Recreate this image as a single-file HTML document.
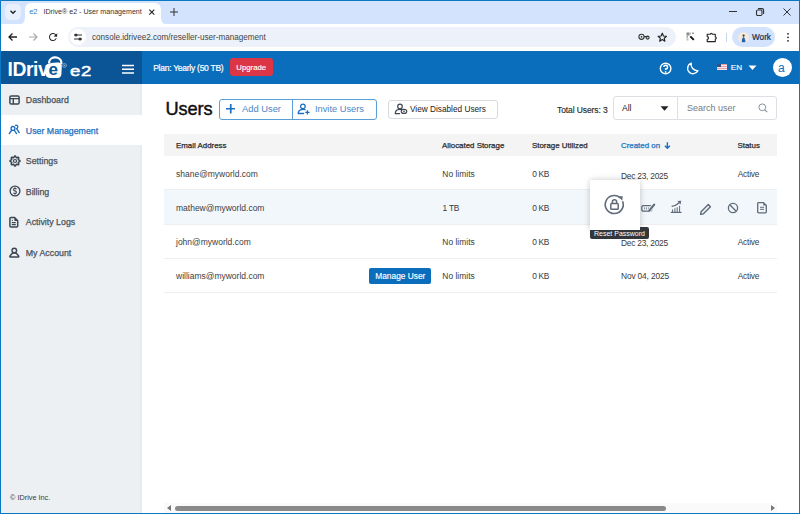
<!DOCTYPE html>
<html><head><meta charset="utf-8">
<style>
*{box-sizing:border-box;margin:0;padding:0}
html,body{width:800px;height:514px;overflow:hidden;background:#fff;font-family:"Liberation Sans",sans-serif}
.a{position:absolute}
.t{position:absolute;white-space:nowrap;line-height:1}
</style></head><body>
<!-- browser tab strip -->
<div class="a" style="left:0;top:0;width:800px;height:24px;background:#d3e3fd"></div>
<!-- active tab -->
<svg class="a" style="left:0;top:0" width="200" height="26" viewBox="0 0 200 26"><path d="M18 24.5 C23 24.5 25 22 25 17 V11 C25 5 27 3 33 3 H153 C159 3 161 5 161 11 V17 C161 22 163 24.5 168 24.5 Z" fill="#fff"/></svg>
<div class="a" style="left:5px;top:4px;width:16px;height:16px;background:#e8f0fd;border-radius:5px"></div>
<svg class="a" style="left:9px;top:8px" width="8" height="8" viewBox="0 0 8 8"><path d="M1.5 2.8 L4 5.2 L6.5 2.8" fill="none" stroke="#222" stroke-width="1.4"/></svg>
<div class="t" style="left:29.3px;top:8px;font-size:7.6px;color:#2a7fd0;letter-spacing:-0.2px">e2</div>
<div class="t" style="left:43.5px;top:8.5px;font-size:7.1px;color:#333">IDrive® e2 - User management</div>
<svg class="a" style="left:148px;top:8px" width="8" height="8" viewBox="0 0 8 8"><path d="M1.3 1.6 L6.3 6.6 M6.3 1.6 L1.3 6.6" stroke="#222" stroke-width="1.1"/></svg>
<svg class="a" style="left:168.5px;top:7px" width="10" height="10" viewBox="0 0 10 10"><path d="M5 1 V9 M1 5 H9" stroke="#333" stroke-width="1"/></svg>
<!-- window controls -->
<div class="a" style="left:729px;top:11px;width:8px;height:1px;background:#333"></div>
<svg class="a" style="left:755px;top:7px" width="10" height="10" viewBox="0 0 10 10"><rect x="1.5" y="3" width="5.5" height="5.5" rx="1.2" fill="none" stroke="#333" stroke-width="1.1"/><path d="M3 1.6 H7 Q8.6 1.6 8.6 3.2 V7" fill="none" stroke="#333" stroke-width="1.1"/></svg>
<svg class="a" style="left:782px;top:7px" width="10" height="10" viewBox="0 0 10 10"><path d="M1.5 1.5 L8.5 8.5 M8.5 1.5 L1.5 8.5" stroke="#333" stroke-width="1"/></svg>
<!-- toolbar -->
<div class="a" style="left:0;top:24px;width:800px;height:27px;background:#fff"></div>
<svg class="a" style="left:6px;top:31px" width="14" height="12" viewBox="0 0 14 12"><path d="M3 6 H11 M6.5 2.5 L3 6 L6.5 9.5" fill="none" stroke="#222" stroke-width="1.3"/></svg>
<svg class="a" style="left:26px;top:31px" width="14" height="12" viewBox="0 0 14 12"><path d="M3 6 H11 M7.5 2.5 L11 6 L7.5 9.5" fill="none" stroke="#aaa" stroke-width="1.2"/></svg>
<svg class="a" style="left:47.4px;top:31.2px" width="12" height="12" viewBox="0 0 24 24"><path transform="rotate(5 12 12)" d="M17.65 6.35C16.2 4.9 14.21 4 12 4c-4.42 0-7.99 3.58-7.99 8s3.57 8 7.99 8c3.73 0 6.84-2.55 7.73-6h-2.08c-.82 2.33-3.04 4-5.65 4-3.31 0-6-2.69-6-6s2.69-6 6-6c1.66 0 3.140.69 4.22 1.78L13 11h7V4l-2.35 2.35z" fill="#222"/></svg>
<div class="a" style="left:68px;top:27px;width:608px;height:20px;background:#edf2fa;border-radius:10px"></div>
<div class="a" style="left:70px;top:29px;width:16px;height:16px;background:#fff;border-radius:8px"></div>
<svg class="a" style="left:73px;top:32px" width="10" height="10" viewBox="0 0 10 10"><path d="M1 3 H9 M1 7 H9" stroke="#333" stroke-width="1.1"/><circle cx="3" cy="3" r="1.5" fill="#333"/><circle cx="7" cy="7" r="1.5" fill="#333"/></svg>
<div class="t" style="left:92px;top:34px;font-size:8.13px;color:#444">console.idrivee2.com/reseller-user-management</div>
<svg class="a" style="left:637px;top:32px" width="14" height="10" viewBox="0 0 14 10"><circle cx="4.5" cy="4.8" r="2.6" fill="none" stroke="#333" stroke-width="1.1"/><circle cx="4.5" cy="4.8" r="0.9" fill="#333"/><path d="M7.1 4.6 H11" stroke="#333" stroke-width="1.2"/><circle cx="10.6" cy="5.6" r="1.5" fill="none" stroke="#333" stroke-width="1.1"/></svg><svg class="a" style="left:657px;top:32px" width="11" height="11" viewBox="0 0 11 11"><path d="M5.3 1.2 L6.5 4 L9.5 4.3 L7.2 6.2 L7.9 9.2 L5.3 7.6 L2.7 9.2 L3.4 6.2 L1.1 4.3 L4.1 4 Z" fill="none" stroke="#222" stroke-width="1.15" stroke-linejoin="round"/></svg>
<svg class="a" style="left:686px;top:32px" width="9" height="9" viewBox="0 0 9 9"><rect x="0.5" y="0.5" width="3" height="3" fill="#888"/><rect x="3.5" y="0.5" width="1.5" height="2" fill="#bbb"/><rect x="0.5" y="3.5" width="1.5" height="2.5" fill="#aaa"/><rect x="6" y="0.5" width="2" height="1.5" fill="#999"/><rect x="0.5" y="6.5" width="2" height="2" fill="#bbb"/><path d="M4.3 4.3 L7.8 7.8" stroke="#111" stroke-width="1.9"/></svg><svg class="a" style="left:706px;top:31.5px" width="12" height="11" viewBox="0 0 12 11"><path d="M1.2 2.3 H4.3 A1 1 0 0 1 6.3 2.3 H9.3 V5 A1 1 0 0 1 9.3 7 V9.6 H1.2 V7.2 A1.3 1.3 0 0 0 1.2 4.6 Z" fill="none" stroke="#222" stroke-width="1.1" stroke-linejoin="round"/></svg>
<div class="a" style="left:726px;top:33px;width:1px;height:9px;background:#c5d5ec"></div>
<div class="a" style="left:732px;top:27px;width:43px;height:20px;background:#d3e3fd;border-radius:10px"></div>
<div class="a" style="left:737.5px;top:31.5px;width:11px;height:11px;background:#f1eadf;border-radius:50%"></div>
<svg class="a" style="left:737.5px;top:31.5px" width="11" height="11" viewBox="0 0 11 11"><circle cx="5.6" cy="3.6" r="1.1" fill="#3a3020"/><path d="M3.9 10.3 Q3.6 6 5.6 5 Q7.4 6 7.2 10.3 Z" fill="#1d5fb0"/><path d="M6.8 7.5 L8 9.5" stroke="#d9a060" stroke-width="0.8"/></svg>
<div class="t" style="left:752px;top:33.8px;font-size:8.2px;color:#1b2a48;-webkit-text-stroke:0.2px #1b2a48">Work</div>
<svg class="a" style="left:785.5px;top:32px" width="4" height="11" viewBox="0 0 4 11"><circle cx="2" cy="1.8" r="0.9" fill="#222"/><circle cx="2" cy="5.3" r="0.9" fill="#222"/><circle cx="2" cy="8.8" r="0.9" fill="#222"/></svg>

<!-- app header -->
<div class="a" style="left:0;top:51px;width:800px;height:33px;background:#0a6ebd"></div>
<div class="a" style="left:0;top:51px;width:142px;height:33px;background:#0b5596"></div>
<div class="t" style="left:7.6px;top:59.9px;font-size:19.3px;color:#fff;font-weight:bold;letter-spacing:-0.45px">IDriv</div>
<svg class="a" style="left:44px;top:54px" width="24" height="26" viewBox="0 0 24 26"><path d="M5.2 9.5 V7.6 A6.1 4.9 0 0 1 17.3 7.9 V10" fill="none" stroke="#fff" stroke-width="2.2"/><path d="M3 10.3 Q8 8.2 14.8 8.6 Q18 9 17.8 12.5 L17.4 20.2 Q17 23.8 13.5 23.9 L5.8 23.9 Q1.6 23.6 1.6 19.5 L1.6 13.5 Q1.6 11.2 3 10.3 Z" fill="#fff"/><text x="9.3" y="20.8" font-size="17" font-weight="bold" font-family="Liberation Sans" fill="#0b5596" text-anchor="middle">e</text></svg>
<div class="t" style="left:69.8px;top:62.7px;font-size:15px;color:#fff;letter-spacing:0.5px;transform:scaleX(1.24);transform-origin:0 0;-webkit-text-stroke:0.5px #fff">e2</div>
<svg class="a" style="left:62px;top:63px" width="5" height="5" viewBox="0 0 5 5"><circle cx="2.5" cy="2.5" r="1.9" fill="none" stroke="#9fb4cf" stroke-width="0.8"/><circle cx="2.5" cy="2.5" r="0.7" fill="#9fb4cf"/></svg>
<svg class="a" style="left:122.2px;top:64px" width="12" height="11" viewBox="0 0 12 11"><path d="M0 1.5 H12 M0 5.25 H12 M0 9 H12" stroke="#fff" stroke-width="1.7"/></svg>
<div class="t" style="left:153.2px;top:64px;font-size:8.5px;letter-spacing:-0.26px;color:#fff;-webkit-text-stroke:0.2px #fff">Plan: Yearly (50 TB)</div>
<div class="a" style="left:230px;top:58px;width:43px;height:18px;background:#dc3545;border-radius:3px"></div>
<div class="t" style="left:236.3px;top:63.5px;font-size:7.8px;color:#fff;-webkit-text-stroke:0.15px #fff">Upgrade</div>
<svg class="a" style="left:659px;top:61.5px" width="13" height="13" viewBox="0 0 13 13"><circle cx="6.6" cy="6.5" r="5.3" fill="none" stroke="#fff" stroke-width="1.4"/><path d="M4.8 5.1 A1.85 1.85 0 1 1 6.6 7 V8.1" fill="none" stroke="#fff" stroke-width="1.5"/><circle cx="6.6" cy="9.9" r="0.85" fill="#fff"/></svg>
<svg class="a" style="left:686px;top:62px" width="13" height="13" viewBox="0 0 13 13"><path d="M5.2 1.2 A5.4 5.4 0 1 0 11.9 8.6 A6.2 6.2 0 0 1 5.2 1.2 Z" fill="none" stroke="#fff" stroke-width="1.4" stroke-linejoin="round"/></svg>
<div class="a" style="left:717px;top:64px;width:10px;height:6px;background:repeating-linear-gradient(#e8a0a8 0 1px,#f0e8ee 1px 2px)"></div>
<div class="a" style="left:717px;top:64px;width:4px;height:3px;background:#3a4f7a"></div>
<div class="t" style="left:730.8px;top:63.6px;font-size:8.1px;color:#fff;-webkit-text-stroke:0.15px #fff">EN</div>
<svg class="a" style="left:748px;top:65px" width="9" height="6" viewBox="0 0 9 6"><path d="M0.5 0.5 H8.5 L4.5 5 Z" fill="#fff"/></svg>
<div class="a" style="left:773px;top:58px;width:19px;height:19px;background:#fff;border-radius:50%"></div>
<div class="t" style="left:778px;top:62px;font-size:12px;color:#0a6ebd">a</div>

<!-- sidebar -->
<div class="a" style="left:0;top:84px;width:142px;height:430px;background:#edf0f3"></div>
<div class="a" style="left:140px;top:84px;width:2px;height:430px;background:#e6ebf0"></div>
<div class="a" style="left:0;top:115px;width:142px;height:30px;background:#fff"></div>

<!-- sidebar items -->
<svg class="a" style="left:9px;top:95px" width="11" height="10" viewBox="0 0 11 10"><rect x="0.9" y="0.9" width="9.2" height="8.2" rx="1.3" fill="none" stroke="#3b4652" stroke-width="1.5"/><path d="M1 3.6 H10 M4.3 3.6 V9" stroke="#3b4652" stroke-width="1.4"/></svg>
<div class="t" style="left:25.8px;top:96.0px;font-size:8.8px;-webkit-text-stroke:0.25px #48515b;color:#48515b">Dashboard</div>
<svg class="a" style="left:8px;top:123px" width="13" height="12" viewBox="0 0 13 12"><circle cx="5" cy="5.4" r="1.9" fill="none" stroke="#1a6fc0" stroke-width="1.35"/><path d="M1.3 10.6 L3.5 7.5 M6.5 7.5 L8.5 10.6" fill="none" stroke="#1a6fc0" stroke-width="1.35" stroke-linecap="round"/><path d="M7.6 2.3 Q9.6 2 9.8 3.6 Q9.9 5 8.7 5.7 L11.2 9.6" fill="none" stroke="#1a6fc0" stroke-width="1.35" stroke-linecap="round"/></svg>
<div class="t" style="left:25.8px;top:126.5px;font-size:8.8px;-webkit-text-stroke:0.25px #1a6fc0;color:#1a6fc0">User Management</div>
<svg class="a" style="left:8.7px;top:154.9px" width="12" height="12" viewBox="0 0 12 12"><path d="M11.05 6.00 L10.94 6.32 L10.64 6.61 L10.22 6.84 L9.79 7.02 L9.46 7.17 L9.28 7.36 L9.27 7.61 L9.40 7.96 L9.58 8.39 L9.71 8.85 L9.72 9.26 L9.57 9.57 L9.26 9.72 L8.85 9.71 L8.39 9.58 L7.96 9.40 L7.61 9.27 L7.36 9.28 L7.17 9.46 L7.02 9.79 L6.84 10.22 L6.61 10.64 L6.32 10.94 L6.00 11.05 L5.68 10.94 L5.39 10.64 L5.16 10.22 L4.98 9.79 L4.83 9.46 L4.64 9.28 L4.39 9.27 L4.04 9.40 L3.61 9.58 L3.15 9.71 L2.74 9.72 L2.43 9.57 L2.28 9.26 L2.29 8.85 L2.42 8.39 L2.60 7.96 L2.73 7.61 L2.72 7.36 L2.54 7.17 L2.21 7.02 L1.78 6.84 L1.36 6.61 L1.06 6.32 L0.95 6.00 L1.06 5.68 L1.36 5.39 L1.78 5.16 L2.21 4.98 L2.54 4.83 L2.72 4.64 L2.73 4.39 L2.60 4.04 L2.42 3.61 L2.29 3.15 L2.28 2.74 L2.43 2.43 L2.74 2.28 L3.15 2.29 L3.61 2.42 L4.04 2.60 L4.39 2.73 L4.64 2.72 L4.83 2.54 L4.98 2.21 L5.16 1.78 L5.39 1.36 L5.68 1.06 L6.00 0.95 L6.32 1.06 L6.61 1.36 L6.84 1.78 L7.02 2.21 L7.17 2.54 L7.36 2.72 L7.61 2.73 L7.96 2.60 L8.39 2.42 L8.85 2.29 L9.26 2.28 L9.57 2.43 L9.72 2.74 L9.71 3.15 L9.58 3.61 L9.40 4.04 L9.27 4.39 L9.28 4.64 L9.46 4.83 L9.79 4.98 L10.22 5.16 L10.64 5.39 L10.94 5.68 Z" fill="none" stroke="#3b4652" stroke-width="1.5" stroke-linejoin="round"/><circle cx="6" cy="6" r="1.5" fill="none" stroke="#3b4652" stroke-width="1.2"/></svg>
<div class="t" style="left:25.8px;top:157.0px;font-size:8.8px;-webkit-text-stroke:0.25px #48515b;color:#48515b">Settings</div>
<svg class="a" style="left:8.5px;top:185.1px" width="12" height="12" viewBox="0 0 12 12"><circle cx="6" cy="6" r="4.9" fill="none" stroke="#3b4652" stroke-width="1.3"/><path d="M7.4 4.2 Q7 3.4 6 3.4 Q4.5 3.4 4.6 4.6 Q4.7 5.6 6 5.9 Q7.5 6.3 7.4 7.4 Q7.3 8.6 6 8.6 Q4.9 8.6 4.5 7.8" fill="none" stroke="#3b4652" stroke-width="1.1"/><path d="M6 2.5 V3.5 M6 8.5 V9.5" stroke="#3b4652" stroke-width="1"/></svg>
<div class="t" style="left:25.8px;top:187.5px;font-size:8.8px;-webkit-text-stroke:0.25px #48515b;color:#48515b">Billing</div>
<svg class="a" style="left:8px;top:216px" width="12" height="12" viewBox="0 0 12 12"><path d="M1.9 2.6 Q1.9 1.6 2.9 1.6 H6.6 L9.7 4.7 V10.1 Q9.7 11.1 8.7 11.1 H2.9 Q1.9 11.1 1.9 10.1 Z" fill="none" stroke="#3b4652" stroke-width="1.5" stroke-linejoin="round"/><path d="M6.4 1.6 L9.7 4.9 L6.4 4.9 Z" fill="#3b4652"/><path d="M3.8 6.6 H7.8 M3.8 8.6 H7.8" stroke="#3b4652" stroke-width="1.1"/><path d="M3.8 4.3 H5" stroke="#3b4652" stroke-width="1"/></svg>
<div class="t" style="left:25.8px;top:218.0px;font-size:8.8px;-webkit-text-stroke:0.25px #48515b;color:#48515b">Activity Logs</div>
<svg class="a" style="left:8px;top:245.5px" width="13" height="13" viewBox="0 0 13 13"><circle cx="6.3" cy="4.5" r="2.3" fill="none" stroke="#3b4652" stroke-width="1.4"/><path d="M2 11 Q1.6 10.6 2 10 L3.8 7.7 Q4.4 7 5.3 7 H7.3 Q8.2 7 8.8 7.7 L10.6 10 Q11 10.6 10.6 11 Z" fill="none" stroke="#3b4652" stroke-width="1.4" stroke-linejoin="round"/></svg>
<div class="t" style="left:25.8px;top:248.5px;font-size:8.8px;-webkit-text-stroke:0.25px #48515b;color:#48515b">My Account</div>
<div class="t" style="left:10px;top:494px;font-size:7.3px;color:#3a3a3a">© IDrive Inc.</div>

<!-- content header -->
<div class="t" style="left:165.5px;top:100px;font-size:18.2px;-webkit-text-stroke:0.45px #111;letter-spacing:-0.1px;color:#111">Users</div>
<div class="a" style="left:219px;top:99px;width:158px;height:21px;border:1px solid #5b9fd8;border-radius:3px"></div>
<div class="a" style="left:292px;top:100px;width:1px;height:19px;background:#5b9fd8"></div>
<svg class="a" style="left:225.5px;top:104.3px" width="9.5" height="9.5" viewBox="0 0 9.5 9.5"><path d="M4.75 0 V9.5 M0 4.75 H9.5" stroke="#1a6fc0" stroke-width="1.7"/></svg>
<div class="t" style="left:242px;top:104.8px;font-size:9.36px;color:#4a86c6">Add User</div>
<svg class="a" style="left:297px;top:103px" width="14" height="13" viewBox="0 0 14 13"><circle cx="5.9" cy="3.4" r="2.3" fill="none" stroke="#1a6fc0" stroke-width="1.3"/><path d="M8 6.6 Q5.5 6.2 3.5 6.8 Q1.3 7.6 1.3 10.5 H6.6" fill="none" stroke="#1a6fc0" stroke-width="1.3" stroke-linecap="round"/><path d="M10.4 7.2 V11.6 M8.2 9.4 H12.6" stroke="#1a6fc0" stroke-width="1.3"/></svg>
<div class="t" style="left:315px;top:104.8px;font-size:9.28px;color:#4a86c6">Invite Users</div>
<div class="a" style="left:388px;top:100px;width:110px;height:19px;border:1px solid #d6dadf;border-radius:3px"></div>
<svg class="a" style="left:394px;top:103px" width="14" height="13" viewBox="0 0 14 13"><circle cx="6" cy="3.4" r="2.3" fill="none" stroke="#3b4652" stroke-width="1.15"/><path d="M7.8 6.6 Q5.5 6.2 3.6 6.8 Q1.3 7.6 1.3 10.6 H5.6" fill="none" stroke="#3b4652" stroke-width="1.15" stroke-linecap="round"/><ellipse cx="10" cy="8.4" rx="2.8" ry="2" fill="none" stroke="#3b4652" stroke-width="1.1"/><circle cx="10" cy="8.4" r="0.8" fill="#3b4652"/></svg>
<div class="t" style="left:410px;top:105.5px;font-size:8.25px;color:#222">View Disabled Users</div>
<div class="t" style="left:557px;top:106px;font-size:8.5px;letter-spacing:-0.1px;-webkit-text-stroke:0.15px #2a2a2a;color:#2a2a2a">Total Users: 3</div>
<div class="a" style="left:613px;top:96px;width:164px;height:24px;border:1px solid #dcdfe3;border-radius:3px"></div>
<div class="a" style="left:677px;top:97px;width:1px;height:22px;background:#dcdfe3"></div>
<div class="t" style="left:622px;top:104px;font-size:8.5px;color:#222">All</div>
<svg class="a" style="left:660px;top:106px" width="9" height="5" viewBox="0 0 9 5"><path d="M0.5 0.3 H8.5 L4.5 4.8 Z" fill="#222"/></svg>
<div class="t" style="left:687px;top:104px;font-size:9px;color:#757b82">Search user</div>
<svg class="a" style="left:757px;top:102px" width="12" height="12" viewBox="0 0 12 12"><circle cx="5.3" cy="5.3" r="3.4" fill="none" stroke="#86929e" stroke-width="1"/><path d="M7.8 7.8 L10.2 10.2" stroke="#86929e" stroke-width="1.2"/></svg>

<!-- table -->
<div class="a" style="left:164px;top:134px;width:613px;height:22px;background:#f4f4f4"></div>
<div class="t" style="left:176px;top:141.5px;font-size:7.9px;-webkit-text-stroke:0.25px #2b2b2b;color:#2b2b2b">Email Address</div>
<div class="t" style="left:442px;top:141.5px;font-size:7.9px;-webkit-text-stroke:0.25px #2b2b2b;color:#2b2b2b">Allocated Storage</div>
<div class="t" style="left:532px;top:141.5px;font-size:7.9px;-webkit-text-stroke:0.25px #2b2b2b;color:#2b2b2b">Storage Utilized</div>
<div class="t" style="left:621px;top:141.5px;font-size:7.9px;-webkit-text-stroke:0.25px #1a73c0;color:#1a73c0">Created on</div>
<svg class="a" style="left:664px;top:142.3px" width="7" height="7" viewBox="0 0 7 7"><path d="M3.4 0.3 V6.3 M0.9 3.8 L3.4 6.3 L5.9 3.8" fill="none" stroke="#1a6fc0" stroke-width="1.4"/></svg>
<div class="t" style="left:737.5px;top:141.5px;font-size:7.9px;-webkit-text-stroke:0.25px #2b2b2b;color:#2b2b2b">Status</div>

<div class="a" style="left:164px;top:189px;width:613px;height:1px;background:#eeeeee"></div>
<div class="a" style="left:164px;top:190px;width:613px;height:34px;background:#f2f7fc"></div>
<div class="a" style="left:164px;top:224px;width:613px;height:1px;background:#eeeeee"></div>
<div class="a" style="left:164px;top:258px;width:613px;height:1px;background:#eeeeee"></div>
<div class="a" style="left:164px;top:292px;width:613px;height:1px;background:#eeeeee"></div>

<div class="t" style="left:176px;top:170px;font-size:8.5px;color:#3d3d3d">shane@myworld.com</div>

<div class="t" style="left:176px;top:204px;font-size:8.5px;color:#3d3d3d">mathew@myworld.com</div>

<div class="t" style="left:176px;top:238px;font-size:8.5px;color:#3d3d3d">john@myworld.com</div>

<div class="t" style="left:176px;top:272px;font-size:8.5px;color:#3d3d3d">williams@myworld.com</div>
<div class="a" style="left:369px;top:268px;width:62px;height:16px;background:#0a6ebd;border-radius:2px"></div>
<div class="t" style="left:375.3px;top:271.7px;font-size:8.33px;color:#fff;-webkit-text-stroke:0.15px #fff">Manage User</div>

<div class="t" style="left:442.3px;top:170.39px;font-size:8.4px;letter-spacing:0.037px;color:#3a3a3a">No limits</div>
<div class="t" style="left:532.2px;top:170.39px;font-size:8.4px;letter-spacing:-0.37px;color:#3a3a3a">0 KB</div>
<div class="t" style="left:621px;top:171.89px;font-size:8.4px;letter-spacing:-0.243px;color:#3a3a3a">Dec 23, 2025</div>
<div class="t" style="left:737.7px;top:170.39px;font-size:8.4px;letter-spacing:-0.215px;color:#3a3a3a">Active</div>
<div class="t" style="left:442.5px;top:204.19px;font-size:8.4px;letter-spacing:-0.2px;color:#3a3a3a">1 TB</div>
<div class="t" style="left:532.2px;top:204.19px;font-size:8.4px;letter-spacing:-0.37px;color:#3a3a3a">0 KB</div>
<div class="t" style="left:442.3px;top:238.19px;font-size:8.4px;letter-spacing:0.037px;color:#3a3a3a">No limits</div>
<div class="t" style="left:532.2px;top:238.19px;font-size:8.4px;letter-spacing:-0.37px;color:#3a3a3a">0 KB</div>
<div class="t" style="left:621px;top:239.19px;font-size:8.4px;letter-spacing:-0.243px;color:#3a3a3a">Dec 23, 2025</div>
<div class="t" style="left:737.7px;top:238.19px;font-size:8.4px;letter-spacing:-0.215px;color:#3a3a3a">Active</div>
<div class="t" style="left:442.3px;top:272.09px;font-size:8.4px;letter-spacing:0.037px;color:#3a3a3a">No limits</div>
<div class="t" style="left:532.2px;top:272.09px;font-size:8.4px;letter-spacing:-0.37px;color:#3a3a3a">0 KB</div>
<div class="t" style="left:621px;top:272.09px;font-size:8.4px;letter-spacing:-0.161px;color:#3a3a3a">Nov 04, 2025</div>
<div class="t" style="left:737.7px;top:272.09px;font-size:8.4px;letter-spacing:-0.215px;color:#3a3a3a">Active</div>
<!-- action icons row 2 -->
<svg class="a" style="left:640px;top:201px" width="16" height="12" viewBox="0 0 16 12"><rect x="1.8" y="4.6" width="10" height="5.6" rx="1.6" fill="none" stroke="#5f6b78" stroke-width="1.3"/><path d="M4.6 6.4 V8.4 M6.6 6.4 V8.4 M8.6 6.4 V8.4" stroke="#5f6b78" stroke-width="0.8"/><path d="M8.8 10.2 L14.6 3.2" stroke="#f2f7fc" stroke-width="3.6"/><path d="M9.2 9.6 L14.2 3.6" stroke="#5f6b78" stroke-width="2.2" stroke-linecap="round"/></svg>
<svg class="a" style="left:670px;top:200px" width="13" height="14" viewBox="0 0 13 14"><path d="M0.8 12.4 H11.6" stroke="#5f6b78" stroke-width="1.2"/><path d="M2.6 12 V9.4 M4.9 12 V8.2 M7.2 12 V7.2 M9.6 12 V5.8" stroke="#5f6b78" stroke-width="1"/><path d="M1.6 6.4 Q6 5.6 9.6 2.4" fill="none" stroke="#5f6b78" stroke-width="1.3"/><path d="M7.4 1 L11.2 0.8 L10.6 4.4 Z" fill="#5f6b78"/></svg>
<svg class="a" style="left:699px;top:203px" width="13" height="12" viewBox="0 0 13 12"><path d="M9.3 1.6 L11.4 3.7 L4.2 10.9 L1.6 11.4 L2.1 8.8 Z" fill="none" stroke="#5f6b78" stroke-width="1.4" stroke-linejoin="round"/></svg>
<svg class="a" style="left:727px;top:202px" width="12" height="12" viewBox="0 0 12 12"><circle cx="6" cy="6" r="4.6" fill="none" stroke="#5f6b78" stroke-width="1.3"/><path d="M2.8 2.8 L9.2 9.2" stroke="#5f6b78" stroke-width="1.3"/></svg>
<svg class="a" style="left:756px;top:201px" width="12" height="13" viewBox="0 0 12 13"><path d="M1.7 2.4 Q1.7 1.6 2.5 1.6 H7.5 L10.3 4.4 V11 Q10.3 11.8 9.5 11.8 H2.5 Q1.7 11.8 1.7 11 Z" fill="none" stroke="#5f6b78" stroke-width="1.3" stroke-linejoin="round"/><path d="M7.3 1.6 L10.3 4.6 L7.3 4.6 Z" fill="#5f6b78"/><path d="M4 6.3 H8 M4 8.3 H8" stroke="#5f6b78" stroke-width="1"/></svg>

<!-- popup -->
<div class="a" style="left:590px;top:180px;width:50px;height:50px;background:#fff;box-shadow:0 0 6px rgba(0,0,0,0.22)"></div>
<div class="a" style="left:590px;top:227px;width:59px;height:12px;background:#33373b;border-radius:2px"></div>
<div class="a" style="left:590px;top:180px;width:50px;height:50px;background:#fff"></div>
<div class="t" style="left:594px;top:230px;font-size:7px;color:#fff">Reset Password</div>
<svg class="a" style="left:603px;top:193px" width="23" height="23" viewBox="0 0 23 23"><path d="M19.6 8.2 A9 9 0 1 1 17.2 4.8" fill="none" stroke="#5f6b78" stroke-width="1.6"/><path d="M15.2 3.3 L19.8 3.3 L19.2 7.8 Z" fill="#5f6b78"/><rect x="7.8" y="10.6" width="7.4" height="5.6" rx="0.8" fill="none" stroke="#5f6b78" stroke-width="1.5"/><path d="M9.4 10.6 V8.8 A2.1 2.1 0 0 1 13.6 8.8 V10.6" fill="none" stroke="#5f6b78" stroke-width="1.5"/></svg>

<!-- scrollbar -->
<div class="a" style="left:164px;top:503px;width:613px;height:10px;background:#fafafa"></div>
<svg class="a" style="left:166px;top:504px" width="6" height="8" viewBox="0 0 6 8"><path d="M5 1 V7 L1 4 Z" fill="#777"/></svg>
<div class="a" style="left:175px;top:505.8px;width:491px;height:5px;background:#8a8a8a;border-radius:2.5px"></div>
<svg class="a" style="left:770px;top:504px" width="6" height="8" viewBox="0 0 6 8"><path d="M1 1 V7 L5 4 Z" fill="#777"/></svg>

<!-- window border -->
<div class="a" style="left:0;top:0;width:800px;height:514px;border:1px solid #0a77c2;pointer-events:none"></div>
</body></html>
